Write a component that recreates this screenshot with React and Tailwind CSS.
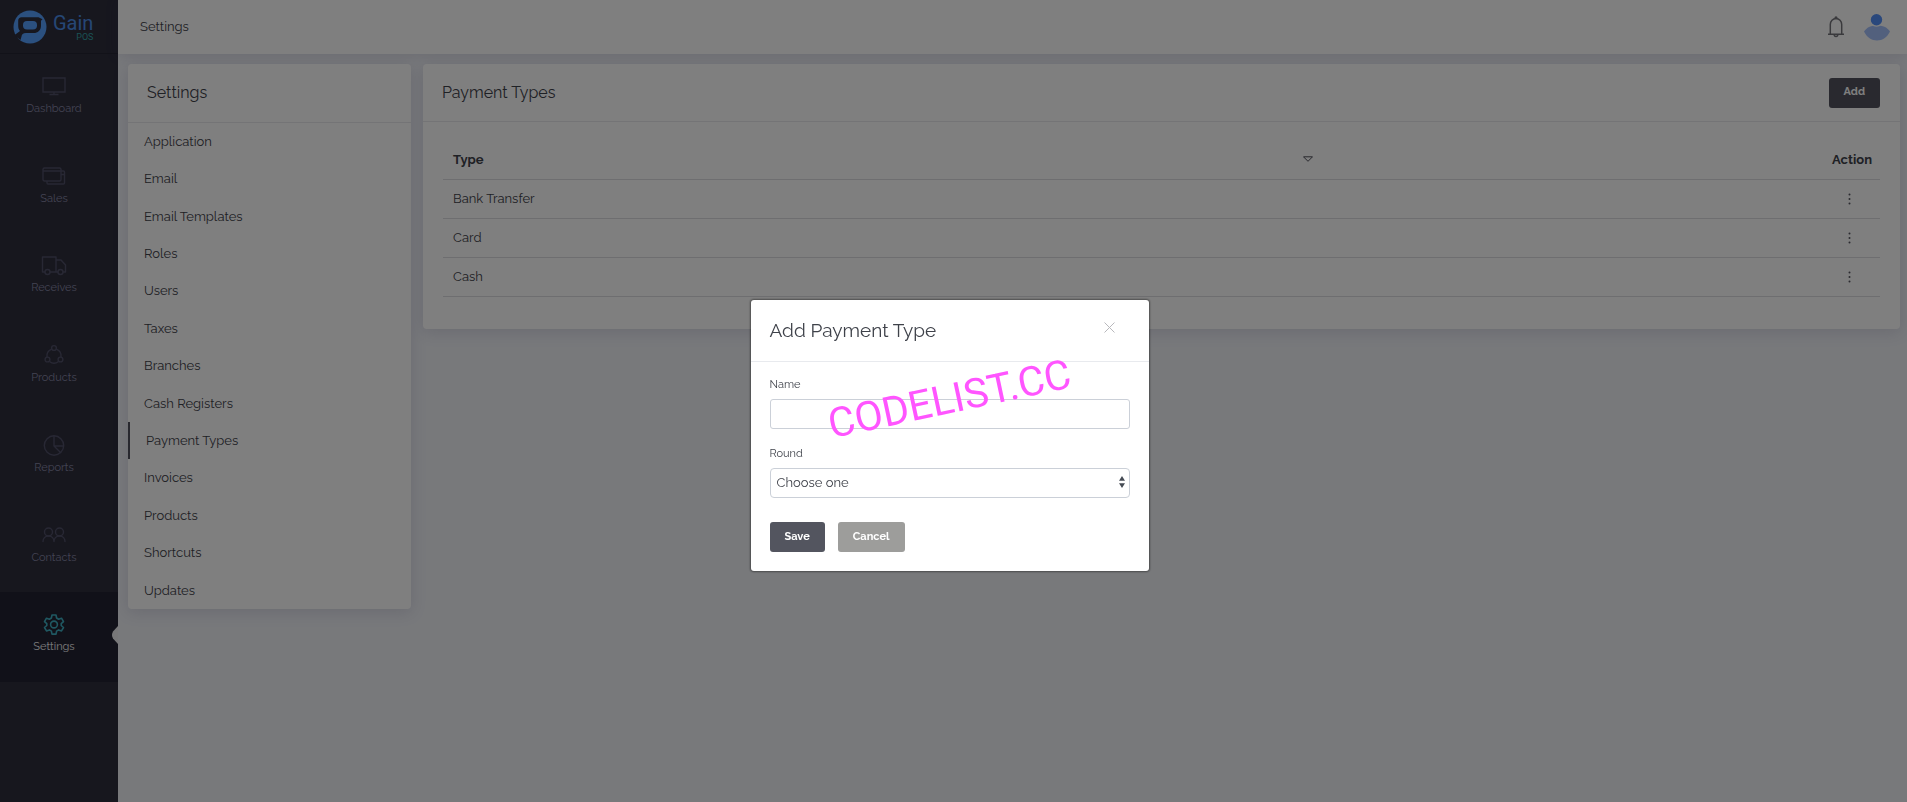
import React from "react";

const line = {
  fill: "none",
  stroke: "currentColor",
  strokeWidth: 1.4,
  strokeLinejoin: "round",
};

const DashboardIcon = () => (
  <svg width="24" height="24" viewBox="0 0 24 24" {...line} strokeLinejoin="miter">
    <path d="M1 4h22v14H1zM12 18v2M7.500 20.500h9" />
  </svg>
);

const SalesIcon = () => (
  <svg width="24" height="24" viewBox="0 0 24 24" {...line}>
    <rect x="1" y="4" width="18" height="13" rx="1.500" />
    <path d="M1 7h18M19 7h2.500q1 0 1 1v11q0 1-1 1H6q-1 0-1-1v-2M19 10.500h3.500" />
  </svg>
);

const ReceivesIcon = () => (
  <svg width="26" height="24" viewBox="0 0 26 24" {...line}>
    <path d="M4 19H1.500V4h13.500v15H9M15 19h2M15 7h5l4.500 5v7H22" />
    <circle cx="6.500" cy="19" r="2.500" />
    <circle cx="19.500" cy="19" r="2.500" />
  </svg>
);

const ProductsIcon = () => (
  <svg width="24" height="24" viewBox="0 0 24 24" {...line}>
    <circle cx="12" cy="5" r="2.400" />
    <circle cx="5.500" cy="16.500" r="2.400" />
    <circle cx="18.500" cy="16.500" r="2.400" />
    <path d="M9.600 6.200A7.500 7.500 0 0 0 5 14M14.400 6.200A7.500 7.500 0 0 1 19 14M7.500 18.500a7.500 7.500 0 0 0 9 0" />
  </svg>
);

const ReportsIcon = () => (
  <svg width="24" height="24" viewBox="0 0 24 24" {...line}>
    <circle cx="12" cy="12.500" r="9.700" />
    <path d="M12 3v10h9.500M12 13l7 7" />
  </svg>
);

const ContactsIcon = () => (
  <svg width="26" height="24" viewBox="0 0 26 24" {...line} strokeLinecap="round">
    <circle cx="7.500" cy="9" r="4" />
    <circle cx="18.500" cy="9" r="4" />
    <path d="M2 18.500c0-3 2-5.500 5.500-5.500s5.500 2.500 5.500 5.500c0-3 2-5.500 5.500-5.500s5.500 2.500 5.500 5.500" />
  </svg>
);

const SettingsIcon = () => (
  <svg width="24" height="24" viewBox="0 0 24 24" {...line} strokeWidth="1.600">
    <circle cx="12" cy="12.500" r="3.400" />
    <path d="M10 3h4l.6 3 2 1.200 2.900-1 2 3.500-2.300 2v1.800l2.300 2-2 3.400-2.900-1-2 1.200-.6 3h-4l-.6-3-2-1.200-2.900 1-2-3.400 2.300-2v-1.800l-2.300-2 2-3.500 2.900 1 2-1.200z" />
  </svg>
);

const BellIcon = () => (
  <svg width="18" height="22" viewBox="0 0 18 22" {...line} strokeWidth="1.500">
    <path d="M1 18.300h16M3.300 18.300V8.500a5.700 6 0 0 1 11.400 0v9.800" />
    <circle cx="9" cy="1.700" r=".8" />
    <path d="M7.200 18.500a1.800 2 0 0 0 3.600 0" />
  </svg>
);

const AvatarIcon = () => (
  <svg width="28" height="28" viewBox="0 0 28 28">
    <path d="M1 18.500C4 14 8.500 12.500 14 12.500S24 14 27 18.500C24 24.500 19.500 27.500 14 27.500S4 24.500 1 18.500z" fill="#a5c0fa" />
    <circle cx="13.500" cy="6.700" r="7" fill="#ffffff" />
    <circle cx="13.500" cy="6.700" r="5.700" fill="#5590f8" />
  </svg>
);

const LogoMark = () => (
  <svg width="34" height="34" viewBox="0 0 34 34">
    <circle cx="17" cy="17" r="16.500" fill="#56a0ff" />
    <path d="M8.500 7.200h17l4 2-1.500 1.500v5c0 4.500-3 7.300-7.500 7.300H13c-3 0-4.200 1.200-4.500 3.500L7.500 30 1 25.500l6-4.500c-1.500-1.500-1.800-3.500-1.800-5.500v-5c0-2 1.300-3.300 3.300-3.300z" fill="#2e2e3c" />
    <rect x="10" y="11" width="14" height="8.500" rx="4" fill="#56a0ff" />
  </svg>
);

const NAV = [
  ["Dashboard", DashboardIcon],
  ["Sales", SalesIcon],
  ["Receives", ReceivesIcon],
  ["Products", ProductsIcon],
  ["Reports", ReportsIcon],
  ["Contacts", ContactsIcon],
  ["Settings", SettingsIcon],
];

const SECTIONS = [
  "Application", "Email", "Email Templates", "Roles", "Users", "Taxes", "Branches",
  "Cash Registers", "Payment Types", "Invoices", "Products", "Shortcuts", "Updates",
];

const TYPES = ["Bank Transfer", "Card", "Cash"];

function Sidebar() {
  return (
    <aside className="w-[118px] shrink-0 bg-[#2e2e3d]">
      <a href="#home" className="flex h-[54px] items-center gap-[6px] border-b border-[#252532] pl-[13px]">
        <LogoMark />
        <span className="flex flex-col items-end font-[Roboto,sans-serif]">
          <span className="text-xl leading-5 text-[#4c8fea]">Gain</span>
          <span className="text-[9px] leading-2 text-[#35a3a8]">POS</span>
        </span>
      </a>
      <nav className="grid h-[628px] auto-rows-fr">
        {NAV.map(([label, Icon]) => {
          const active = label === "Settings";
          return (
            <a
              key={label}
              href={"#" + label.toLowerCase()}
              className={
                "relative flex flex-col items-center gap-px pr-[10px] pt-5 text-[11px] leading-5 " +
                (active ? "bg-[#232332] text-[#f4f4f8]" : "text-[#8888a6]")
              }
            >
              <span className={active ? "text-[#3fb0c4]" : "text-[#505068]"}>
                <Icon />
              </span>
              {label}
              {active && (
                <svg className="absolute right-0 top-[34px]" width="6" height="18" viewBox="0 0 6 18" fill="#efeff1">
                  <path d="M6 0v18L1 12.500q-2-3.500 0-7z" />
                </svg>
              )}
            </a>
          );
        })}
      </nav>
    </aside>
  );
}

function SettingsMenu() {
  return (
    <section className="w-[283px] shrink-0 rounded-sm bg-white shadow-[0_3px_16px_rgba(69,65,120,0.16)]">
      <h2 className="h-[59px] border-b border-[#e8e8ec] pl-[19px] text-base leading-[58px]">Settings</h2>
      <nav className="grid h-[486px] auto-rows-fr text-[13px]">
        {SECTIONS.map((name) => (
          <a
            key={name}
            href={"#" + name.toLowerCase().replace(" ", "-")}
            className={
              "flex items-center pl-4 " + (name === "Payment Types" ? "border-l-2 border-[#50505e]" : "")
            }
          >
            {name}
          </a>
        ))}
      </nav>
    </section>
  );
}

function PaymentTypes() {
  return (
    <section className="min-w-0 flex-1 rounded-sm bg-white pb-8 shadow-[0_3px_16px_rgba(69,65,120,0.16)]">
      <div className="flex h-[58px] items-center justify-between border-b border-[#e8e8ec] pl-[19px] pr-5">
        <h2 className="text-base">Payment Types</h2>
        <button type="button" className="h-[30px] rounded-[3px] bg-[#53535f] px-[15px] text-[11px] font-bold text-white">
          Add
        </button>
      </div>
      <div className="px-5 pt-[18px]">
        <table className="w-full table-fixed text-[13px]">
          <thead>
            <tr className="h-[39px] border-b border-[#dcdce0]">
              <th className="w-3/5 pl-[10px] text-left font-bold">
                <span className="flex items-center justify-between">
                  Type
                  <svg width="10" height="6" viewBox="0 0 10 6" className="-mr-2">
                    <path d="M.5.800h9L5 5.300z" fill="none" stroke="#50505a" />
                  </svg>
                </span>
              </th>
              <th className="pr-2 text-right font-bold">Action</th>
            </tr>
          </thead>
          <tbody>
            {TYPES.map((type) => (
              <tr key={type} className="h-[39px] border-b border-[#dcdce0]">
                <td className="pl-[10px]">{type}</td>
                <td className="pr-[26px]">
                  <button type="button" aria-label={"Actions for " + type} className="ml-auto flex w-[10px] justify-center">
                    <svg width="3" height="12" viewBox="0 0 3 12" fill="#55555f">
                      <circle cx="1.500" cy="1.500" r="1" />
                      <circle cx="1.500" cy="6" r="1" />
                      <circle cx="1.500" cy="10.500" r="1" />
                    </svg>
                  </button>
                </td>
              </tr>
            ))}
          </tbody>
        </table>
      </div>
    </section>
  );
}

function AddDialog() {
  return (
    <div
      role="dialog"
      aria-labelledby="dialog-title"
      className="relative w-[398px] rounded-[3px] bg-white shadow-[0_0_2px_1px_rgba(0,0,0,0.4)]"
    >
      <div className="flex h-[62px] items-center justify-between border-b border-[#e8eaee] pl-[19px] pr-[34px] pb-[2px]">
        <h2 id="dialog-title" className="text-[19px] leading-7">Add Payment Type</h2>
        <button type="button" aria-label="Close" className="pb-1 text-[#b8b8bc]">
          <svg width="11" height="11" viewBox="0 0 11 11" fill="none" stroke="currentColor">
            <path d="M.5.500l10 10M10.500.500l-10 10" />
          </svg>
        </button>
      </div>
      <form className="px-[19px] pb-[19px] pt-[13px]">
        <label htmlFor="name" className="block text-[11px] leading-5">Name</label>
        <input
          id="name"
          type="text"
          className="mt-1 block h-[30px] w-full rounded-[3px] border border-[#cbd0d8] px-[6px] text-[13px] outline-none"
        />
        <label htmlFor="round" className="mt-[15px] block text-[11px] leading-5">Round</label>
        <div className="relative mt-1">
          <select
            id="round"
            className="block h-[30px] w-full appearance-none rounded-[4px] border border-[#cbd0d8] bg-white px-[6px] text-[13px] outline-none"
          >
            <option>Choose one</option>
          </select>
          <svg className="pointer-events-none absolute right-[5px] top-2" width="6" height="12" viewBox="0 0 6 12" fill="#454b54">
            <path d="M0 4.800L3 0l3 4.800zM0 7.200h6L3 12z" />
          </svg>
        </div>
        <div className="mt-6 flex gap-[13px] text-[11px] font-bold text-white">
          <button type="button" className="h-[30px] rounded-[3px] bg-[#53555f] px-[15px]">Save</button>
          <button type="button" className="h-[30px] rounded-[3px] bg-[#9d9d9b] px-[15px]">Cancel</button>
        </div>
      </form>
      <div className="pointer-events-none absolute inset-x-0 top-[72px] flex justify-center">
        <span className="-rotate-12 whitespace-nowrap font-[Roboto,sans-serif] text-[41px] leading-[54px] text-[#ff55ff]">
          CODELIST.CC
        </span>
      </div>
    </div>
  );
}

export default function App() {
  return (
    <div className="flex min-h-screen bg-[#f0f2f7] font-[Raleway,Lato,sans-serif] text-[#3f424a]">
      <Sidebar />
      <div className="flex min-w-0 flex-1 flex-col">
        <header className="flex h-[54px] items-center justify-between bg-white pl-[22px] pr-4 shadow-[0_1px_12px_rgba(69,65,120,0.16)]">
          <h1 className="text-[13px]">Settings</h1>
          <div className="flex items-center gap-[18px]">
            <button type="button" aria-label="Notifications" className="text-[#75757b]">
              <BellIcon />
            </button>
            <button type="button" aria-label="Account">
              <AvatarIcon />
            </button>
          </div>
        </header>
        <main className="flex items-start gap-3 pl-[10px] pr-[7px] pt-[10px]">
          <SettingsMenu />
          <PaymentTypes />
        </main>
      </div>
      <div className="fixed inset-0 flex items-start justify-center bg-black/50 pr-2 pt-[300px]">
        <AddDialog />
      </div>
    </div>
  );
}
